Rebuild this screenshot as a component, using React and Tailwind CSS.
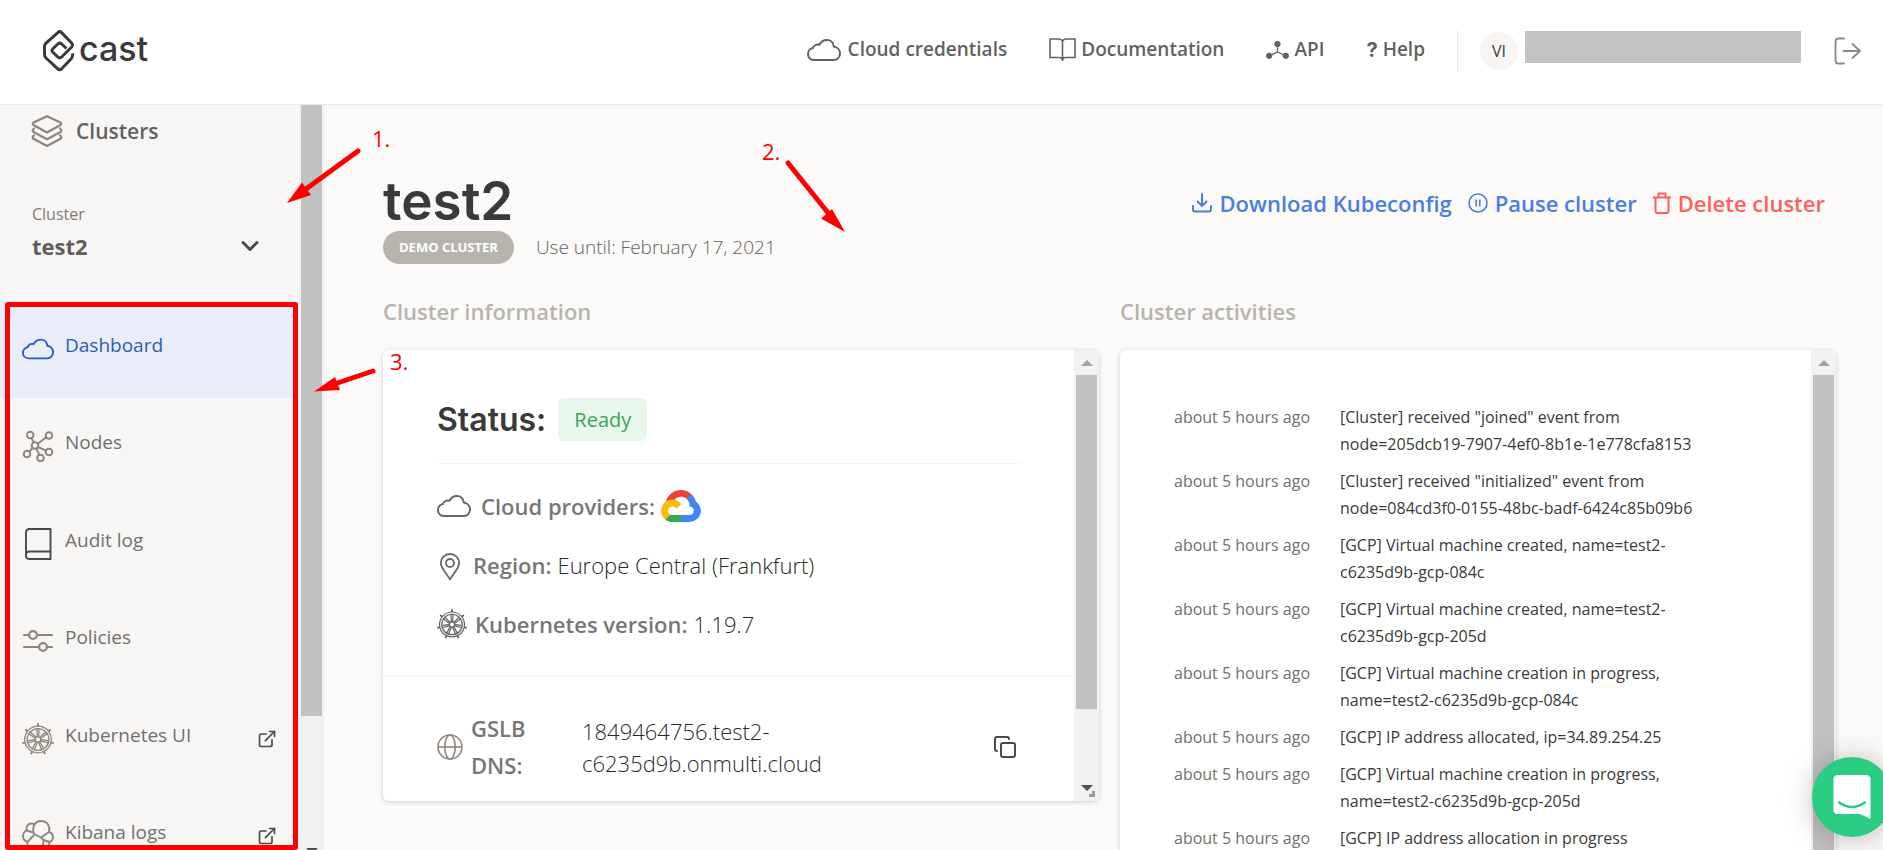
import React from 'react';
import { ChevronDown, Copy, ExternalLink } from 'lucide-react';

function Logo() {
  return (
    <svg className="h-[42px] w-8" viewBox="0 0 32 42" fill="none" stroke="#3a3a3a" strokeWidth="3" strokeLinecap="butt" strokeLinejoin="round">
      <path d="M23.5 18.5 L18.6 14 Q16.7 12.3 14.8 14 L9.6 19 Q8.4 20.5 9.6 22 L15 27.2 Q16.7 28.6 18.4 27.2 L28.6 17 Q30.3 15 28.6 13 L18.6 2.6 Q16.7 0.8 14.8 2.6 L3 13.2 Q1.5 14.6 1.5 16.6 V24 Q1.5 26.4 3 28 L14.8 38.8 Q16.7 40.5 18.6 38.8 L28.2 28.8 Q30 26.8 29.6 23.4" />
    </svg>
  );
}

function CloudIcon({ className }) {
  return (
    <svg className={className} viewBox="0 0 34 22" fill="none" stroke="currentColor" strokeWidth="2" strokeLinejoin="round">
      <path d="M7.5 21 C3.8 21 1 18.6 1 15.2 C1 11.8 3.3 9.4 6 9.1 C6.7 6.4 9.6 5.1 12.4 5.8 C14 2.7 16.8 1 20 1 C23.7 1 26.5 3.6 26.8 7.5 C30.4 8 33 10.9 33 14.5 C33 18.2 30.3 21 26.8 21 Z" />
    </svg>
  );
}

function OpenBookIcon() {
  return (
    <svg className="h-6 w-[27px]" viewBox="0 0 27 24" fill="none" stroke="currentColor" strokeWidth="1.6">
      <path d="M13.5 23 V4.5 C13.5 2.4 12 1 9.8 1 H1 V19.5 H10.5 C12.3 19.5 13.5 20.5 13.5 22.5 C13.5 20.5 14.7 19.5 16.5 19.5 H26 V1 H17.2 C15 1 13.5 2.4 13.5 4.5" />
    </svg>
  );
}

function ApiIcon() {
  return (
    <svg className="h-[18px] w-[23px]" viewBox="0 0 23 18" fill="currentColor" stroke="currentColor">
      <path d="M11.5 3 V11 L3 15 M11.5 11 L20 15" fill="none" strokeWidth="1.3" />
      <circle cx="11.5" cy="3" r="2.7" />
      <circle cx="3.2" cy="14.8" r="2.7" />
      <circle cx="19.8" cy="14.8" r="2.7" />
    </svg>
  );
}

function LogoutIcon() {
  return (
    <svg className="h-7 w-7" viewBox="0 0 28 28" fill="none" stroke="currentColor" strokeWidth="1.8" strokeLinecap="round" strokeLinejoin="round">
      <path d="M10 1.5 H4.5 Q1.5 1.5 1.5 4.5 V23.5 Q1.5 26.5 4.5 26.5 H10 M9.5 14 H26 M18.5 7 L26 14 L18.5 21" />
    </svg>
  );
}

function LayersIcon() {
  return (
    <svg className="h-8 w-8" viewBox="0 0 32 32" fill="none" stroke="#8f867c" strokeWidth="2.2" strokeLinejoin="round" strokeLinecap="round">
      <path d="M16 1.2 L29.5 7.5 Q31 8.8 29.5 10 L16 17.5 L2.500 10 Q1 8.800 2.500 7.500 Z" />
      <path d="M3 13.5 Q0.500 15.500 2.500 17 L16 24.200 L29.500 17 Q31.500 15.500 29 13.500" />
      <path d="M3 20.300 Q0.500 22.300 2.500 23.800 L16 31 L29.500 23.800 Q31.500 22.300 29 20.300" />
    </svg>
  );
}

function NodesIcon() {
  return (
    <svg className="h-8 w-8" viewBox="0 0 32 32" fill="none" stroke="#8f867c" strokeWidth="2">
      <circle cx="8.200" cy="5" r="3.300" />
      <circle cx="27" cy="5.500" r="3.300" />
      <circle cx="13" cy="15.500" r="3.300" />
      <circle cx="5" cy="24" r="3.300" />
      <circle cx="27" cy="22" r="3.300" />
      <circle cx="18.500" cy="28" r="3.300" />
      <path d="M9.400 8.200 L11.800 12.300 M24.200 7.300 L15.900 13.700 M10.700 18 L7.300 21.500 M16 17 L24 20.700 M14.400 18.500 L17.200 24.900" />
    </svg>
  );
}

function BookIcon() {
  return (
    <svg className="h-8 w-8" viewBox="0 0 32 32" fill="none" stroke="#4a4a48" strokeWidth="1.900" strokeLinejoin="round">
      <path d="M28.500 1 H7.500 Q4 1 4 4.500 V27.500 Q4 31 7.500 31 H28.500 Z M28.500 23.500 H7.500 Q4 23.500 4 27.200" />
    </svg>
  );
}

function SlidersIcon() {
  return (
    <svg className="h-8 w-8" viewBox="0 0 32 32" fill="none" stroke="#8f867c" strokeWidth="2.2" strokeLinecap="round">
      <path d="M2 10 H7 M15 10 H30 M2 22 H17 M25 22 H30" />
      <circle cx="11" cy="10" r="3.900" />
      <circle cx="21" cy="22" r="3.900" />
    </svg>
  );
}

const SPOKES = [0, 1, 2, 3, 4, 5, 6];

function HelmIcon({ className }) {
  return (
    <svg className={className} viewBox="0 0 32 32" fill="none" stroke="currentColor" strokeWidth="1.300">
      <circle cx="16" cy="16.500" r="13.300" />
      <circle cx="16" cy="16.500" r="10.900" />
      <circle cx="16" cy="16.500" r="2.700" />
      {SPOKES.map((i) => (
        <g key={i} transform={`rotate(${(i * 360) / 7} 16 16.5)`}>
          <path d="M15.300 13.900 L14.900 5.700 M16.700 13.900 L17.100 5.700" />
          <path d="M16 3.300 V0.300" strokeWidth="2" />
        </g>
      ))}
    </svg>
  );
}

function KibanaIcon() {
  return (
    <svg className="h-8 w-8" viewBox="0 0 32 32" fill="none" stroke="#8f867c" strokeWidth="1.900" strokeLinejoin="round">
      <path d="M12 14 C9.500 7 13 1 19 1 C25 1 28.500 6 27 12 L19 17.500 Z" />
      <path d="M12.500 4.500 C8 2 3.500 5 4.700 10.500 L11 12.500" />
      <path d="M4.700 10.500 C0 12.500 -0.500 20 5.500 22 L12 15" />
      <path d="M27 12 C32 13.500 32.500 20 27.500 22 L21.500 20 L19 17.500" />
      <path d="M5.500 22 C4.500 27 8 31 13 31 C18 31 22 27 21.500 20 M27.500 22 C28 26 24.500 28.500 20.500 26.500" />
    </svg>
  );
}

function DownloadIcon() {
  return (
    <svg className="h-5 w-5" viewBox="0 0 20 20" fill="none" stroke="currentColor" strokeWidth="2" strokeLinecap="round" strokeLinejoin="round">
      <path d="M10 1 V13 M5.500 8.500 L10 13 L14.500 8.500 M1 13 V16.500 Q1 18.500 3 18.500 H17 Q19 18.500 19 16.500 V13" />
    </svg>
  );
}

function PauseIcon() {
  return (
    <svg className="h-5 w-5" viewBox="0 0 20 20" fill="none" stroke="currentColor" strokeWidth="1.600">
      <circle cx="10" cy="10" r="9" />
      <path d="M8.200 6.500 V13.500 M11.800 6.500 V13.500" />
    </svg>
  );
}

function TrashIcon() {
  return (
    <svg className="h-[22px] w-[18px]" viewBox="0 0 18 22" fill="none" stroke="currentColor" strokeWidth="2" strokeLinejoin="round">
      <path d="M0 5.500 H18 M5.500 5 V1.500 H12.500 V5 M2.500 5.500 V19 Q2.500 21 4.500 21 H13.500 Q15.500 21 15.500 19 V5.500" />
    </svg>
  );
}

function GoogleCloudLogo() {
  return (
    <svg className="h-8 w-10" viewBox="0 0 256 206" role="img" aria-label="Google Cloud">
      <path fill="#EA4335" d="M170.250 56.820 L192.500 34.570 L193.990 25.200 C153.440 -11.680 88.980 -7.500 52.420 33.920 C42.270 45.420 34.730 59.760 30.720 74.570 L38.690 73.450 L83.190 66.110 L86.630 62.600 C106.420 40.850 139.900 37.930 162.760 56.430 Z" />
      <path fill="#4285F4" d="M224.200 73.920 C219.090 55.080 208.590 38.150 193.990 25.200 L162.760 56.430 C175.940 67.200 183.460 83.440 183.130 100.470 V106.010 C198.490 106.010 210.930 118.450 210.930 133.810 C210.930 149.160 198.490 161.290 183.130 161.290 H127.460 L122 167.220 V200.560 L127.460 205.800 H183.130 C223.060 206.110 255.690 174.300 256 134.370 C256.190 110.170 244.250 87.480 224.200 73.920" />
      <path fill="#34A853" d="M71.870 205.800 H127.460 V161.290 H71.870 C67.910 161.290 63.970 160.440 60.370 158.790 L52.370 161.240 L30.080 183.490 L28.110 191 C40.700 200.490 56.100 205.800 71.870 205.800" />
      <path fill="#FBBC05" d="M71.870 61.430 C31.940 61.660 -0.240 94.230 0 134.160 C0.130 156.460 10.550 177.450 28.230 191.030 L60.480 158.790 C46.490 152.470 40.270 136.020 46.590 122.030 C52.920 108.040 69.370 101.820 83.360 108.140 C89.520 110.930 94.460 115.860 97.250 122.030 L129.480 89.790 C115.770 71.860 94.450 61.370 71.870 61.430" />
    </svg>
  );
}

function PinIcon() {
  return (
    <svg className="h-7 w-[26px]" viewBox="0 0 26 28" fill="none" stroke="#666" strokeWidth="1.800" strokeLinejoin="round">
      <path d="M13 26.500 C11 22 3.800 15.500 3.800 10 C3.800 4.800 8 1 13 1 C18 1 22.200 4.800 22.200 10 C22.200 15.500 15 22 13 26.500 Z" />
      <circle cx="13" cy="10" r="4" />
    </svg>
  );
}

function GlobeIcon() {
  return (
    <svg className="h-[26px] w-[26px] shrink-0" viewBox="0 0 26 26" fill="none" stroke="#8f867c" strokeWidth="1.600">
      <circle cx="13" cy="13" r="12" />
      <ellipse cx="13" cy="13" rx="5.200" ry="12" />
      <path d="M1 13 H25" />
    </svg>
  );
}

function Arrow({ up, className }) {
  return (
    <svg className={className} viewBox="0 0 12 6" fill="currentColor" aria-hidden="true">
      <path d={up ? 'M0 6 L6 0 L12 6 Z' : 'M0 0 L6 6 L12 0 Z'} />
    </svg>
  );
}

function NavLink({ icon, children, gap }) {
  return (
    <a href="#" className={`flex items-center ${gap}`}>
      {icon}
      <span>{children}</span>
    </a>
  );
}

function Header() {
  return (
    <header className="flex h-[105px] shrink-0 items-center border-b border-[#e9eaea] bg-white pr-[21px] pb-[3px] pl-[43px]">
      <a href="#" className="flex items-center gap-1">
        <Logo />
        <span className="pb-1 font-[Inter,sans-serif] text-[34px] leading-10 font-medium text-[#3a3a3a]">cast</span>
      </a>
      <nav className="ml-auto flex items-center text-[19px] font-semibold text-[#63625f]">
        <div className="flex items-center gap-[42px] pr-8 pb-[2px]">
          <NavLink gap="gap-[7px]" icon={<CloudIcon className="h-[22px] w-[34px]" />}>Cloud credentials</NavLink>
          <NavLink gap="gap-[5px]" icon={<OpenBookIcon />}>Documentation</NavLink>
          <NavLink gap="gap-[5px]" icon={<ApiIcon />}>API</NavLink>
          <NavLink gap="gap-[5px]" icon={<span className="font-[Inter,sans-serif] text-xl font-bold">?</span>}>Help</NavLink>
        </div>
        <div className="flex items-center border-l border-[#ececec] py-px pl-[22px]">
          <span className="flex size-[38px] items-center justify-center rounded-full bg-[#f7f6f5] text-base font-normal text-[#3a3a3a]">VI</span>
          <span className="mr-[33px] mb-2 ml-[7px] h-8 w-[276px] bg-[#c3c3c3]" />
          <button type="button" aria-label="Log out" className="text-[#8f867c]"><LogoutIcon /></button>
        </div>
      </nav>
    </header>
  );
}

const MENU = [
  { label: 'Dashboard', icon: <CloudIcon className="h-[22px] w-8" />, active: true },
  { label: 'Nodes', icon: <NodesIcon /> },
  { label: 'Audit log', icon: <BookIcon /> },
  { label: 'Policies', icon: <SlidersIcon /> },
  { label: 'Kubernetes UI', icon: <HelmIcon className="size-8 text-[#8f867c]" />, external: true },
  { label: 'Kibana logs', icon: <KibanaIcon />, external: true },
];

function Sidebar() {
  return (
    <aside className="relative flex w-[324px] shrink-0 overflow-hidden bg-[#f7f6f5]">
      <div className="flex w-[299px] flex-col">
        <a href="#" className="flex items-center gap-[13px] pt-[10px] pl-[31px] text-[21px] leading-[30px] font-semibold text-[#63625f]">
          <LayersIcon />
          Clusters
        </a>
        <button type="button" className="mt-[55px] flex items-end justify-between pr-[35px] pl-8 text-left">
          <span className="flex flex-col">
            <span className="text-base leading-6 text-[#7d7b78]">Cluster</span>
            <span className="mt-[2px] text-[22px] leading-9 font-bold text-[#5f5e5a]">test2</span>
          </span>
          <ChevronDown className="mb-1 size-7 text-[#4a4a48]" strokeWidth={2.5} />
        </button>
        <nav className="mt-9 grid h-[585px] shrink-0 auto-rows-fr">
          {MENU.map((item) => (
            <a
              key={item.label}
              href="#"
              className={`flex items-center px-[22px] text-[19px] ${item.active ? 'bg-[#e8edf8] text-[#2a5cbf]' : 'text-[#72706d]'}`}
            >
              <span className="flex w-[43px] items-center">{item.icon}</span>
              <span className="pb-2">{item.label}</span>
              {item.external && <ExternalLink className="ml-auto size-5 text-[#4a4a48]" strokeWidth={2} />}
            </a>
          ))}
        </nav>
      </div>
      <div className="flex w-[25px] flex-col items-center bg-[#f1f1f1]">
        <div className="h-[82%] w-[21px] bg-[#c1c1c1]" />
        <Arrow className="mt-auto h-[6px] w-3 translate-y-1 text-[#505050]" />
      </div>
      <div className="absolute top-[197px] bottom-0 left-[5px] w-[293px] rounded-[3px] border-[5px] border-[#ff0000]" />
    </aside>
  );
}

const LABEL = 'text-[22px] leading-8 font-semibold text-[#777]';
const VALUE = 'text-[22px] leading-8 font-light text-[#2a2a2a]';

function InformationCard() {
  return (
    <div className="flex h-[451px] overflow-hidden rounded-md bg-white shadow-[0_1px_5px_rgba(0,0,0,0.18)]">
      <div className="min-w-0 flex-1">
        <div className="px-[54px] pt-12 pb-9">
          <div className="flex items-center gap-3 border-b border-[#f4f4f4] pb-[22px]">
            <h3 className="font-[Inter,sans-serif] text-[32px] leading-10 font-semibold text-[#3a3a3a]">Status:</h3>
            <span className="rounded-md bg-[#e8f7ec] px-4 py-[6px] text-xl leading-[31px] font-medium text-[#3ba455]">Ready</span>
          </div>
          <ul className="pt-[26px]">
            <li className="flex h-[59px] items-start">
              <CloudIcon className="mt-[5px] mr-[10px] h-[22px] w-[34px] text-[#666]" />
              <span className={`${LABEL} mr-[6px]`}>Cloud providers:</span>
              <GoogleCloudLogo />
            </li>
            <li className="flex h-[59px] items-start">
              <span className="mt-1 mr-[10px]"><PinIcon /></span>
              <span className={`${LABEL} mr-[6px]`}>Region:</span>
              <span className={VALUE}>Europe Central (Frankfurt)</span>
            </li>
            <li className="flex items-start">
              <HelmIcon className="mt-px mr-2 size-[30px] text-[#666]" />
              <span className={`${LABEL} mr-[6px]`}>Kubernetes version:</span>
              <span className={VALUE}>1.19.7</span>
            </li>
          </ul>
        </div>
        <div className="flex items-center border-t border-[#f4f4f4] px-[54px] pt-[33px]">
          <GlobeIcon />
          <span className="ml-2 w-[72px] text-[22px] leading-[37px] font-semibold text-[#777]">GSLB DNS:</span>
          <span className={`${VALUE} ml-[39px] w-[260px]`}>1849464756.test2-c6235d9b.onmulti.cloud</span>
          <button type="button" aria-label="Copy" className="ml-auto pr-[3px] text-[#4a4a48]">
            <Copy className="size-6" strokeWidth={2} />
          </button>
        </div>
      </div>
      <div className="flex w-[25px] flex-col items-center bg-[#f1f1f1]">
        <Arrow up className="mt-[10px] h-[6px] w-3 text-[#a3a3a3]" />
        <div className="mt-[9px] h-[334px] w-[21px] bg-[#c1c1c1]" />
        <Arrow className="mt-auto h-[6px] w-3 text-[#505050]" />
        <div className="mr-1 mb-1 h-[6px] w-[6px] self-end border-r-3 border-b-3 border-[#9a9a9a]" />
      </div>
    </div>
  );
}

const EVENTS = [
  '[Cluster] received "joined" event from node=205dcb19-7907-4ef0-8b1e-1e778cfa8153',
  '[Cluster] received "initialized" event from node=084cd3f0-0155-48bc-badf-6424c85b09b6',
  '[GCP] Virtual machine created, name=test2-c6235d9b-gcp-084c',
  '[GCP] Virtual machine created, name=test2-c6235d9b-gcp-205d',
  '[GCP] Virtual machine creation in progress, name=test2-c6235d9b-gcp-084c',
  '[GCP] IP address allocated, ip=34.89.254.25',
  '[GCP] Virtual machine creation in progress, name=test2-c6235d9b-gcp-205d',
  '[GCP] IP address allocation in progress',
];

function ActivitiesCard() {
  return (
    <div className="flex min-h-0 flex-1 overflow-hidden rounded-t-md bg-white shadow-[0_1px_5px_rgba(0,0,0,0.18)]">
      <div className="min-w-0 flex-1 pt-[54px] pl-[54px]">
        <ul className="flex flex-col gap-[10px] text-base leading-[27px]">
          {EVENTS.map((text) => (
            <li key={text} className="grid grid-cols-[138px_370px] gap-7">
              <span className="whitespace-nowrap text-[#72706d]">about 5 hours ago</span>
              <span className="text-[#3a3a3a]">{text}</span>
            </li>
          ))}
        </ul>
      </div>
      <div className="flex w-[25px] flex-col items-center bg-[#f1f1f1]">
        <Arrow up className="mt-[10px] h-[6px] w-3 text-[#a3a3a3]" />
        <div className="mt-[9px] w-[21px] flex-1 bg-[#c1c1c1]" />
      </div>
    </div>
  );
}

function Main() {
  return (
    <main className="flex min-w-0 flex-1 flex-col bg-[#fbfaf9] pr-[47px] pl-[59px]">
      <div className="flex items-start justify-between pt-[66px]">
        <div>
          <h1 className="font-[Inter,sans-serif] text-[53px] leading-[60px] font-semibold text-[#3a3a3a]">test2</h1>
          <div className="flex items-center gap-[22px]">
            <span className="rounded-full bg-[#b7b4ae] px-4 text-[13px] leading-[33px] font-bold text-white">DEMO CLUSTER</span>
            <span className="text-[19px] leading-[33px] font-light text-[#63625f]">Use until: February 17, 2021</span>
          </div>
        </div>
        <div className="flex items-center gap-4 pt-4 pr-[11px] text-[22px] leading-8 font-semibold text-[#4a7fe0]">
          <button type="button" className="flex items-center gap-[7px]"><DownloadIcon />Download Kubeconfig</button>
          <button type="button" className="flex items-center gap-[7px]"><PauseIcon />Pause cluster</button>
          <button type="button" className="flex items-center gap-[7px] text-[#ff5f5f]"><TrashIcon />Delete cluster</button>
        </div>
      </div>
      <div className="mt-[31px] grid min-h-0 flex-1 grid-cols-2 gap-[21px]">
        <section>
          <h2 className="mb-[23px] text-[22px] leading-8 font-semibold text-[#b7b4ae]">Cluster information</h2>
          <InformationCard />
        </section>
        <section className="flex min-h-0 flex-col">
          <h2 className="mb-[23px] text-[22px] leading-8 font-semibold text-[#b7b4ae]">Cluster activities</h2>
          <ActivitiesCard />
        </section>
      </div>
    </main>
  );
}

function Callouts() {
  return (
    <div className="pointer-events-none absolute inset-0 overflow-hidden text-[22px] leading-6 text-[#ff0000]">
      <svg className="absolute top-0 left-0 h-[420px] w-[860px]" viewBox="0 0 860 420" fill="#ff0000" stroke="#ff0000">
        <g strokeWidth="5" strokeLinecap="round">
          <path d="M358 151 L306 189" />
          <path d="M788 163 L829 214" />
          <path d="M373 371 L336 383.500" />
        </g>
        <g stroke="none">
          <path d="M287 203 L302 182.500 L311 195 Z" />
          <path d="M845 232 L821 218.500 L832 209 Z" />
          <path d="M314 391.500 L335 377 L340 390 Z" />
        </g>
      </svg>
      <span className="absolute top-[126px] left-[372px]">1.</span>
      <span className="absolute top-[139px] left-[762px]">2.</span>
      <span className="absolute top-[349px] left-[390px]">3.</span>
    </div>
  );
}

function ChatButton() {
  return (
    <button
      type="button"
      aria-label="Open chat"
      className="absolute -right-[9px] bottom-[13px] flex size-20 items-center justify-center rounded-full bg-[#2acd81] shadow-[0_2px_30px_rgba(0,0,0,0.25)]"
    >
      <svg className="h-11 w-[38px]" viewBox="0 0 38 44">
        <path fill="#fff" d="M5 0 H33 Q37.500 0 37.500 4.500 V44 L27 39 H5 Q0.500 39 0.500 34.500 V4.500 Q0.500 0 5 0 Z" />
        <path d="M6 27.500 Q19 36.500 32 27.500" fill="none" stroke="#2acd81" strokeWidth="2.500" strokeLinecap="round" />
      </svg>
    </button>
  );
}

export default function App() {
  return (
    <div className="relative flex h-screen flex-col overflow-hidden font-['Open_Sans','Noto_Sans',sans-serif]">
      <Header />
      <div className="flex min-h-0 flex-1">
        <Sidebar />
        <Main />
      </div>
      <Callouts />
      <ChatButton />
    </div>
  );
}
